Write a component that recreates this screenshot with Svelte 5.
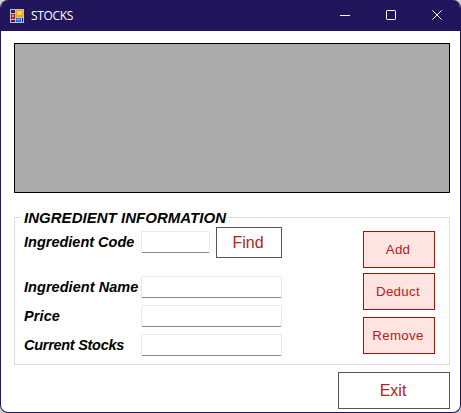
<script>
  const fields = [
    { id: 'name', label: 'Ingredient Name', spacing: '0.05px' },
    { id: 'price', label: 'Price', spacing: '0.1px' },
    { id: 'stocks', label: 'Current Stocks', spacing: '-0.28px' }
  ];
  const actions = ['Add', 'Deduct', 'Remove'];
</script>

<div class="window">
  <header>
    <svg class="logo" width="14" height="14" viewBox="0 0 14 14" shape-rendering="crispEdges">
      <path fill="#bfc0c8" d="M0 0h14v14H0z" />
      <path fill="#29206b" d="M1 1h4v3H1zM1 11h4v2H1z" />
      <path fill="#b7201b" d="M1 5h4v5H1z" />
      <path fill="#f28b72" d="M2 6h2v2H2z" />
      <path fill="#e9a21b" d="M6 1h7v7H6z" />
      <path fill="#ffd95e" d="M7 2h5v4H7z" />
      <path fill="#306bd0" d="M6 9h5v4H6z" />
      <path fill="#83b9fa" d="M7 10h3v1H7z" />
      <path fill="#29206b" d="M12 9h1v4h-1z" />
    </svg>
    <span class="title">STOCKS</span>
    <div class="controls">
      <svg width="10" height="10" viewBox="0 0 10 10"><path d="M0 5.5h10" /></svg>
      <svg width="10" height="10" viewBox="0 0 10 10"><rect x=".5" y=".5" width="9" height="9" rx=".7" /></svg>
      <svg width="10" height="10" viewBox="0 0 10 10"><path d="M.3.3l9.4 9.4M9.7.3L.3 9.7" /></svg>
    </div>
  </header>
  <main>
    <div class="grid"></div>
    <section>
      <h2>INGREDIENT INFORMATION</h2>
      <div class="body">
        <div class="form">
          <div class="row code">
            <label for="code">Ingredient Code</label>
            <input id="code" class="short" />
            <button class="find">Find</button>
          </div>
          {#each fields as f}
            <div class="row">
              <label for={f.id} style="letter-spacing:{f.spacing}">{f.label}</label>
              <input id={f.id} />
            </div>
          {/each}
        </div>
        <div class="actions">
          {#each actions as a}
            <button class="action">{a}</button>
          {/each}
        </div>
      </div>
    </section>
    <button class="exit">Exit</button>
  </main>
</div>

<style>
  :global(body) {
    margin: 0;
    background: #d2d2d4;
  }
  * {
    box-sizing: border-box;
  }
  .window {
    width: 461px;
    height: 413px;
    overflow: hidden;
    display: flex;
    flex-direction: column;
    background: #fff;
    border: 1px solid #21165b;
    border-top: 0;
    border-radius: 8px;
    font-family: "Liberation Sans", Arial, sans-serif;
  }
  header {
    height: 31px;
    flex: none;
    margin: 0 -1px;
    padding: 0 19px 1px 10px;
    display: flex;
    align-items: center;
    background: #21165b;
    color: #fff;
  }
  .logo {
    margin-top: 1px;
  }
  .title {
    margin-left: 7px;
    padding-top: 2px;
    font: 12px/16px "Open Sans", "Noto Sans", sans-serif;
    letter-spacing: -0.35px;
  }
  .controls {
    margin-left: auto;
    display: flex;
    gap: 36px;
  }
  .controls svg {
    fill: none;
    stroke: #fff;
    stroke-width: 1;
  }
  main {
    flex: 1;
    padding: 12px 10px 0 13px;
    display: flex;
    flex-direction: column;
  }
  .grid {
    height: 150px;
    flex: none;
    background: #ababab;
    border: 1px solid #000;
  }
  section {
    height: 148px;
    flex: none;
    margin-top: 24px;
    border: 1px solid #dcdcdc;
  }
  h2 {
    width: max-content;
    height: 18px;
    margin: -9px 0 0 6px;
    padding: 0 0 0 3px;
    background: #fff;
    font: italic bold 15px/18px "Liberation Sans", Arial, sans-serif;
    letter-spacing: 0.03px;
    color: #000;
  }
  .body {
    display: flex;
    justify-content: space-between;
    padding-right: 14px;
  }
  .row {
    display: flex;
    align-items: center;
    height: 22px;
    margin-bottom: 7px;
    padding-left: 9px;
  }
  .row.code {
    height: 31px;
    margin-bottom: 18px;
  }
  .code label {
    margin-top: -2px;
  }
  label {
    width: 117px;
    flex: none;
    font: italic bold 14.5px/18px "Liberation Sans", Arial, sans-serif;
    color: #000;
    white-space: nowrap;
  }
  input {
    width: 141px;
    height: 22px;
    padding: 0 4px;
    border: 1px solid #e8e8e8;
    border-bottom-color: #858585;
    border-radius: 2px;
    background: #fff;
    outline: 0;
  }
  .short {
    width: 69px;
    margin-bottom: 2px;
  }
  button {
    padding: 0 2px 0 0;
    font: 16px/18px "Liberation Sans", Arial, sans-serif;
    color: #b22222;
    background: #fff;
    border: 1px solid #555;
  }
  .find {
    width: 66px;
    height: 31px;
    margin-left: 6px;
  }
  .actions {
    display: flex;
    flex-direction: column;
    padding-top: 4px;
  }
  .action {
    width: 72px;
    height: 37px;
    margin-bottom: 5px;
    font-size: 13.33px;
    letter-spacing: 0.3px;
    background: #ffe4e1;
    border-color: #a01408;
  }
  .action:last-child {
    margin: 2px 0 0;
  }
  .exit {
    width: 112px;
    height: 37px;
    flex: none;
    align-self: flex-end;
    margin-top: 7px;
  }
</style>
